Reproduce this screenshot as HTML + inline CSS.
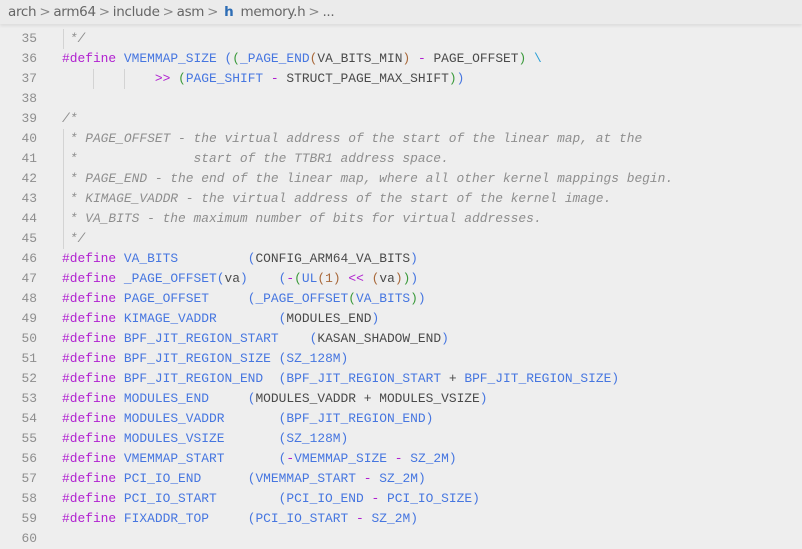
<!DOCTYPE html>
<html><head><style>
html,body{margin:0;padding:0;width:802px;height:543px;overflow:hidden;background:#eeeeee;}
.bc{position:absolute;left:0;top:0;width:802px;height:24px;background:#ebebeb;box-shadow:0 2px 3px rgba(0,0,0,0.08);font-family:"DejaVu Sans","Liberation Sans",sans-serif;font-size:13.5px;color:#666;line-height:24px;padding-left:8px;box-sizing:border-box;z-index:2;letter-spacing:-0.3px;}
.bc .s{color:#888;margin:0 3px;}
.bc .h{color:#2d6db5;font-weight:bold;margin:0 7px 0 3px;}
.code{position:absolute;left:0;top:29px;width:802px;font-family:"Liberation Mono",monospace;font-size:12.9px;color:#4a4a4a;}
.l{height:20px;line-height:20px;position:relative;white-space:pre;}
.n{position:absolute;left:0;width:37px;text-align:right;color:#8e8e8e;}
.t{position:absolute;left:62px;}
.g{position:absolute;top:0;width:1px;height:20px;background:#d3d3d3;}
.k{color:#b01fd0}.b{color:#4676e0}.c{color:#8e8e8e;font-style:italic}
.p1{color:#4676e0}.p2{color:#3b9a3b}.p3{color:#a8683a}.o{color:#b01fd0}.e{color:#2a9fd6}
</style></head><body>
<div class="bc">arch<span class="s">&gt;</span>arm64<span class="s">&gt;</span>include<span class="s">&gt;</span>asm<span class="s">&gt;</span><span class="h">h</span>memory.h<span class="s">&gt;</span>...</div>
<div class="code">
<div class="l"><span class="n">35</span><span class="g" style="left:63px"></span><span class="t c"> */</span></div>
<div class="l"><span class="n">36</span><span class="t"><span class="k">#define</span> <span class="b">VMEMMAP_SIZE</span> <span class="p1">(</span><span class="p2">(</span><span class="b">_PAGE_END</span><span class="p3">(</span>VA_BITS_MIN<span class="p3">)</span> <span class="o">-</span> PAGE_OFFSET<span class="p2">)</span> <span class="e">\</span></span></div>
<div class="l"><span class="n">37</span><span class="g" style="left:93px"></span><span class="g" style="left:124px"></span><span class="t">            <span class="o">&gt;&gt;</span> <span class="p2">(</span><span class="b">PAGE_SHIFT</span> <span class="o">-</span> STRUCT_PAGE_MAX_SHIFT<span class="p2">)</span><span class="p1">)</span></span></div>
<div class="l"><span class="n">38</span></div>
<div class="l"><span class="n">39</span><span class="t c">/*</span></div>
<div class="l"><span class="n">40</span><span class="g" style="left:63px"></span><span class="t c"> * PAGE_OFFSET - the virtual address of the start of the linear map, at the</span></div>
<div class="l"><span class="n">41</span><span class="g" style="left:63px"></span><span class="t c"> *               start of the TTBR1 address space.</span></div>
<div class="l"><span class="n">42</span><span class="g" style="left:63px"></span><span class="t c"> * PAGE_END - the end of the linear map, where all other kernel mappings begin.</span></div>
<div class="l"><span class="n">43</span><span class="g" style="left:63px"></span><span class="t c"> * KIMAGE_VADDR - the virtual address of the start of the kernel image.</span></div>
<div class="l"><span class="n">44</span><span class="g" style="left:63px"></span><span class="t c"> * VA_BITS - the maximum number of bits for virtual addresses.</span></div>
<div class="l"><span class="n">45</span><span class="g" style="left:63px"></span><span class="t c"> */</span></div>
<div class="l"><span class="n">46</span><span class="t"><span class="k">#define</span> <span class="b">VA_BITS</span>         <span class="p1">(</span>CONFIG_ARM64_VA_BITS<span class="p1">)</span></span></div>
<div class="l"><span class="n">47</span><span class="t"><span class="k">#define</span> <span class="b">_PAGE_OFFSET</span><span class="p1">(</span>va<span class="p1">)</span>    <span class="p1">(</span><span class="o">-</span><span class="p2">(</span><span class="b">UL</span><span class="p3">(</span><span class="p3">1</span><span class="p3">)</span> <span class="o">&lt;&lt;</span> <span class="p3">(</span>va<span class="p3">)</span><span class="p2">)</span><span class="p1">)</span></span></div>
<div class="l"><span class="n">48</span><span class="t"><span class="k">#define</span> <span class="b">PAGE_OFFSET</span>     <span class="p1">(</span><span class="b">_PAGE_OFFSET</span><span class="p2">(</span><span class="b">VA_BITS</span><span class="p2">)</span><span class="p1">)</span></span></div>
<div class="l"><span class="n">49</span><span class="t"><span class="k">#define</span> <span class="b">KIMAGE_VADDR</span>        <span class="p1">(</span>MODULES_END<span class="p1">)</span></span></div>
<div class="l"><span class="n">50</span><span class="t"><span class="k">#define</span> <span class="b">BPF_JIT_REGION_START</span>    <span class="p1">(</span>KASAN_SHADOW_END<span class="p1">)</span></span></div>
<div class="l"><span class="n">51</span><span class="t"><span class="k">#define</span> <span class="b">BPF_JIT_REGION_SIZE</span> <span class="p1">(</span><span class="b">SZ_128M</span><span class="p1">)</span></span></div>
<div class="l"><span class="n">52</span><span class="t"><span class="k">#define</span> <span class="b">BPF_JIT_REGION_END</span>  <span class="p1">(</span><span class="b">BPF_JIT_REGION_START</span> + <span class="b">BPF_JIT_REGION_SIZE</span><span class="p1">)</span></span></div>
<div class="l"><span class="n">53</span><span class="t"><span class="k">#define</span> <span class="b">MODULES_END</span>     <span class="p1">(</span>MODULES_VADDR + MODULES_VSIZE<span class="p1">)</span></span></div>
<div class="l"><span class="n">54</span><span class="t"><span class="k">#define</span> <span class="b">MODULES_VADDR</span>       <span class="p1">(</span><span class="b">BPF_JIT_REGION_END</span><span class="p1">)</span></span></div>
<div class="l"><span class="n">55</span><span class="t"><span class="k">#define</span> <span class="b">MODULES_VSIZE</span>       <span class="p1">(</span><span class="b">SZ_128M</span><span class="p1">)</span></span></div>
<div class="l"><span class="n">56</span><span class="t"><span class="k">#define</span> <span class="b">VMEMMAP_START</span>       <span class="p1">(</span><span class="o">-</span><span class="b">VMEMMAP_SIZE</span> <span class="o">-</span> <span class="b">SZ_2M</span><span class="p1">)</span></span></div>
<div class="l"><span class="n">57</span><span class="t"><span class="k">#define</span> <span class="b">PCI_IO_END</span>      <span class="p1">(</span><span class="b">VMEMMAP_START</span> <span class="o">-</span> <span class="b">SZ_2M</span><span class="p1">)</span></span></div>
<div class="l"><span class="n">58</span><span class="t"><span class="k">#define</span> <span class="b">PCI_IO_START</span>        <span class="p1">(</span><span class="b">PCI_IO_END</span> <span class="o">-</span> <span class="b">PCI_IO_SIZE</span><span class="p1">)</span></span></div>
<div class="l"><span class="n">59</span><span class="t"><span class="k">#define</span> <span class="b">FIXADDR_TOP</span>     <span class="p1">(</span><span class="b">PCI_IO_START</span> <span class="o">-</span> <span class="b">SZ_2M</span><span class="p1">)</span></span></div>
<div class="l"><span class="n">60</span></div>
</div>
</body></html>
